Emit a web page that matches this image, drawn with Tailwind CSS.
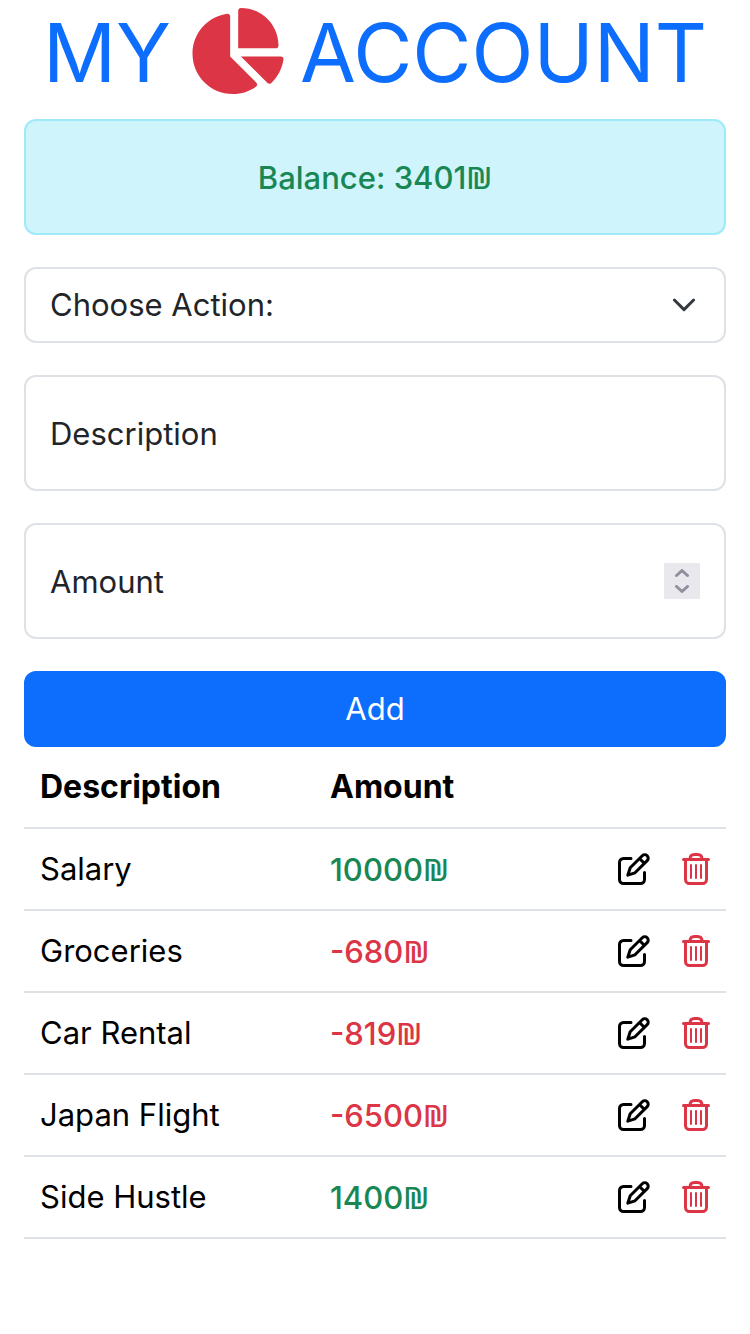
<!DOCTYPE html>
<html lang="en">
<head>
<meta charset="utf-8">
<meta name="viewport" content="width=device-width, initial-scale=1">
<title>My Account</title>
<script src="https://cdn.jsdelivr.net/npm/@tailwindcss/browser@4"></script>
</head>
<body class="min-h-screen bg-white font-['Inter','Liberation_Sans',sans-serif] text-[31px] leading-[48px] text-[#212529]">
<svg class="hidden" aria-hidden="true">
  <symbol id="edit" viewBox="0 0 32 32">
    <g fill="none" stroke="currentColor" stroke-width="3" stroke-linecap="round" stroke-linejoin="round">
      <path d="M13 5.500H5.500a4 4 0 0 0-4 4v17a4 4 0 0 0 4 4h17a4 4 0 0 0 4-4V19.500"/>
      <path d="M24.300 2.700a3.400 3.400 0 0 1 4.900 4.900L17 19.800 9.800 22.200 12.200 14.800zM21.500 5.500l4.900 4.900"/>
    </g>
  </symbol>
  <symbol id="trash" viewBox="0 0 28 32">
    <g fill="none" stroke="currentColor" stroke-linecap="round" stroke-linejoin="round">
      <path stroke-width="3" d="M1.500 6.500h25M3.500 6.500v20a4 4 0 0 0 4 4h13a4 4 0 0 0 4-4v-20M8 6c0-3 2-4.500 4.500-4.500h3c2.500 0 4.500 1.500 4.500 4.500"/>
      <path stroke-width="2" d="M9 12v13M14 12v13M19 12v13"/>
    </g>
  </symbol>
</svg>
<main class="px-6">
  <h1 class="flex h-[103px] items-center justify-center text-[81px] leading-[103px] font-[370] text-[#0d6efd]">
    <span class="pt-1">MY</span>
    <svg class="mr-4 mb-0.5 ml-4 h-[86px] w-[97px] shrink-0 text-[#dc3545]" viewBox="0 0 576 512" fill="currentColor" aria-hidden="true"><path d="M304 240V16.600c0-9 7-16.600 16-16.600C443.700 0 544 100.300 544 224c0 9-7.600 16-16.600 16H304zM32 272C32 150.700 122.100 50.300 239 34.300c9.200-1.300 17 6.100 17 15.400V288L412.500 444.500c6.700 6.700 6.200 17.700-1.500 23.100C371.800 495.600 323.800 512 272 512C139.500 512 32 404.600 32 272zm526.400 16c9.300 0 16.600 7.800 15.400 17c-7.700 55.900-34.600 105.600-73.900 142.300c-6 5.600-15.400 5.200-21.200-.7L320 288H558.400z"/></svg>
    <span class="pt-1">ACCOUNT</span>
  </h1>
  <div class="mt-4 flex h-[116px] items-center justify-center rounded-xl border-2 border-[#9eeaf9] bg-[#cff4fc] font-medium text-[#198754]"><p>Balance: 3401<span class="font-['Noto_Sans']">₪</span></p></div>
  <form class="mt-8">
    <div class="relative">
      <select aria-label="Action" class="block h-[76px] w-full appearance-none rounded-xl border-2 border-[#dee2e6] bg-white pr-[72px] pl-6">
        <option>Choose Action:</option>
        <option>Income</option>
        <option>Expense</option>
      </select>
      <svg class="pointer-events-none absolute top-[22px] right-[26px] size-8" viewBox="0 0 16 16" fill="none" stroke="#343a40" stroke-linecap="round" stroke-linejoin="round" aria-hidden="true"><path d="m3.200 5.500 4.800 4.800 4.800-4.800" stroke-width="1.500"/></svg>
    </div>
    <input type="text" aria-label="Description" placeholder="Description" class="mt-8 block h-[116px] w-full rounded-xl border-2 border-[#dee2e6] px-6 placeholder:text-[#212529]">
    <div class="mt-8 flex h-[116px] items-center rounded-xl border-2 border-[#dee2e6] px-6">
      <input type="number" aria-label="Amount" placeholder="Amount" class="h-full min-w-0 flex-1 appearance-none outline-none placeholder:text-[#212529] [&::-webkit-inner-spin-button]:appearance-none">
      <div class="flex size-9 flex-col bg-[#e9e9ed] text-[#8f8f9d]">
        <button type="button" aria-label="Increase" class="flex flex-1 items-end justify-center pb-1"><svg class="h-2 w-4" viewBox="0 0 16 8" fill="none" stroke="currentColor" stroke-width="3" stroke-linecap="round" stroke-linejoin="round"><path d="m2.500 6.500 5.500-5 5.500 5"/></svg></button>
        <button type="button" aria-label="Decrease" class="flex flex-1 items-start justify-center pt-1"><svg class="h-2 w-4" viewBox="0 0 16 8" fill="none" stroke="currentColor" stroke-width="3" stroke-linecap="round" stroke-linejoin="round"><path d="m2.500 1.500 5.500 5 5.500-5"/></svg></button>
      </div>
    </div>
    <button type="submit" class="mt-8 block h-[76px] w-full rounded-xl bg-[#0d6efd] text-white">Add</button>
  </form>
  <table class="w-full table-fixed border-collapse text-left text-black">
    <colgroup><col class="w-[290px]"><col><col class="w-[140px]"></colgroup>
    <thead>
      <tr class="h-[81px] border-b-2 border-[#dee2e6]"><th scope="col" class="px-4 text-[32px] font-bold">Description</th><th scope="col" class="px-4 text-[32px] font-bold">Amount</th><td></td></tr>
    </thead>
    <tbody>
      <tr class="h-[82px] border-b-2 border-[#dee2e6]"><td class="px-4">Salary</td><td class="px-4 font-medium text-[#198754]">10000<span class="font-['Noto_Sans']">₪</span></td><td class="pr-4"><div class="flex justify-end gap-8"><button type="button" aria-label="Edit Salary"><svg class="size-8"><use href="#edit"/></svg></button><button type="button" aria-label="Delete Salary" class="text-[#dc3545]"><svg class="h-8 w-7"><use href="#trash"/></svg></button></div></td></tr>
      <tr class="h-[82px] border-b-2 border-[#dee2e6]"><td class="px-4">Groceries</td><td class="px-4 font-medium text-[#dc3545]">-680<span class="font-['Noto_Sans']">₪</span></td><td class="pr-4"><div class="flex justify-end gap-8"><button type="button" aria-label="Edit Groceries"><svg class="size-8"><use href="#edit"/></svg></button><button type="button" aria-label="Delete Groceries" class="text-[#dc3545]"><svg class="h-8 w-7"><use href="#trash"/></svg></button></div></td></tr>
      <tr class="h-[82px] border-b-2 border-[#dee2e6]"><td class="px-4">Car Rental</td><td class="px-4 font-medium text-[#dc3545]">-819<span class="font-['Noto_Sans']">₪</span></td><td class="pr-4"><div class="flex justify-end gap-8"><button type="button" aria-label="Edit Car Rental"><svg class="size-8"><use href="#edit"/></svg></button><button type="button" aria-label="Delete Car Rental" class="text-[#dc3545]"><svg class="h-8 w-7"><use href="#trash"/></svg></button></div></td></tr>
      <tr class="h-[82px] border-b-2 border-[#dee2e6]"><td class="px-4">Japan Flight</td><td class="px-4 font-medium text-[#dc3545]">-6500<span class="font-['Noto_Sans']">₪</span></td><td class="pr-4"><div class="flex justify-end gap-8"><button type="button" aria-label="Edit Japan Flight"><svg class="size-8"><use href="#edit"/></svg></button><button type="button" aria-label="Delete Japan Flight" class="text-[#dc3545]"><svg class="h-8 w-7"><use href="#trash"/></svg></button></div></td></tr>
      <tr class="h-[82px] border-b-2 border-[#dee2e6]"><td class="px-4">Side Hustle</td><td class="px-4 font-medium text-[#198754]">1400<span class="font-['Noto_Sans']">₪</span></td><td class="pr-4"><div class="flex justify-end gap-8"><button type="button" aria-label="Edit Side Hustle"><svg class="size-8"><use href="#edit"/></svg></button><button type="button" aria-label="Delete Side Hustle" class="text-[#dc3545]"><svg class="h-8 w-7"><use href="#trash"/></svg></button></div></td></tr>
    </tbody>
  </table>
</main>
</body>
</html>
